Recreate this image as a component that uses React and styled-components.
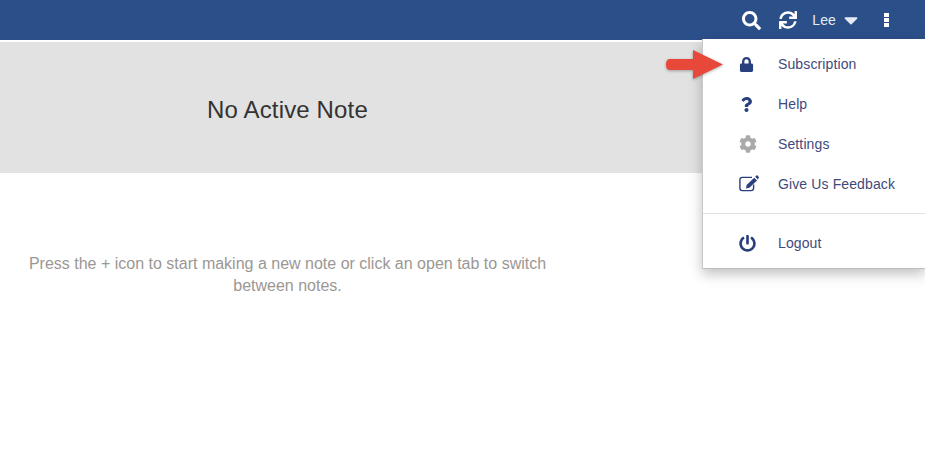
import React from 'react';
import styled, { createGlobalStyle } from 'styled-components';
import { FaSearch, FaSync, FaCaretDown, FaLock, FaQuestion, FaCog, FaPowerOff } from 'react-icons/fa';

const GlobalStyle = createGlobalStyle`
  html, body {
    margin: 0;
    padding: 0;
    background: #fff;
    font-family: "Liberation Sans", Arial, sans-serif;
  }
`;

const Page = styled.div`
  position: relative;
  width: 925px;
  height: 474px;
  overflow: hidden;
  background: #fff;
`;

const Header = styled.header`
  height: 40px;
  background: #2b4f89;
  display: flex;
  align-items: center;
  justify-content: flex-end;
  padding-right: 36px;
  color: #fff;
`;

const IconButton = styled.span`
  display: flex;
  align-items: center;
  font-size: ${props => props.size || 18}px;
  margin-right: ${props => props.gap || 0}px;
  color: ${props => props.soft ? '#e6ebf3' : '#fff'};
`;

const UserName = styled.span`
  font-size: 14px;
  color: #e6ebf3;
  margin-right: 4px;
  letter-spacing: 0.1px;
`;

const Dots = styled.span`
  display: flex;
  flex-direction: column;
  gap: 1px;
  margin-left: 22px;
`;

const Dot = styled.i`
  display: block;
  width: 5px;
  height: 4px;
  background: #fff;
`;

const Banner = styled.section`
  margin-top: 2px;
  height: 131px;
  background: #e2e2e2;
`;

const NoteColumn = styled.div`
  width: 575px;
  text-align: center;
`;

const BannerTitle = styled(NoteColumn)`
  font-size: 24px;
  line-height: 135px;
  color: #333;
  letter-spacing: 0.15px;
`;

const Hint = styled(NoteColumn)`
  margin-top: 80px;
  font-size: 16px;
  line-height: 22px;
  color: #9b9794;
  padding: 0 25px;
  box-sizing: border-box;
`;

const Menu = styled.nav`
  position: absolute;
  left: 702px;
  top: 39px;
  width: 223px;
  height: 230px;
  background: #fff;
  box-sizing: border-box;
  padding-top: 5px;
  border-left: 1px solid #c9c9c9;
  border-bottom: 1px solid #bdbdbd;
  box-shadow: 0 5px 12px rgba(0, 0, 0, 0.25);
`;

const MenuItem = styled.div`
  display: flex;
  align-items: center;
  height: 40px;
  font-size: 14px;
  letter-spacing: 0.12px;
  color: #3f4a7c;
`;

const MenuIcon = styled.span`
  flex: 0 0 75px;
  display: flex;
  justify-content: flex-start;
  box-sizing: border-box;
  padding-left: 36px;
  font-size: ${props => props.size || 16}px;
  color: ${props => props.muted ? '#a9a9a9' : '#2a3f7e'};
`;

const Divider = styled.hr`
  margin: 9px 0 9px;
  border: 0;
  border-top: 1px solid #e2e2e2;
`;

const Arrow = styled.svg`
  position: absolute;
  left: 664px;
  top: 48px;
`;

const FeedbackIcon = () => (
  <svg width="20" height="18" viewBox="0 0 20 18">
    <path d="M13 2.4 H3.4 Q.9 2.4 .9 4.9 V13 Q.9 15.6 3.4 15.6 H12 Q14.6 15.6 14.6 13 V9.4" fill="none" stroke="currentColor" strokeWidth="1.4" />
    <path d="M15.2 2.8 L18 5.6 L10.4 12.8 L7 13.4 L7.6 10 Z" fill="currentColor" />
    <path d="M16.2 1.8 L17.4 .6 Q18 .1 18.6 .6 L19.8 2 Q20.2 2.6 19.7 3.1 L18.8 4.4 Z" fill="currentColor" />
  </svg>
);

const items = [
  { label: 'Subscription', Icon: FaLock, size: 15 },
  { label: 'Help', Icon: FaQuestion, size: 15 },
  { label: 'Settings', Icon: FaCog, size: 18, muted: true },
  { label: 'Give Us Feedback', Icon: FeedbackIcon },
];

export default function App() {
  return (
    <Page>
      <GlobalStyle />
      <Header>
        <IconButton size={19} gap={18}><FaSearch /></IconButton>
        <IconButton size={18} gap={15}><FaSync /></IconButton>
        <UserName>Lee</UserName>
        <IconButton size={22} soft><FaCaretDown /></IconButton>
        <Dots><Dot /><Dot /><Dot /></Dots>
      </Header>
      <Banner>
        <BannerTitle>No Active Note</BannerTitle>
      </Banner>
      <Hint>Press the + icon to start making a new note or click an open tab to switch between notes.</Hint>
      <Menu>
        {items.map(({ label, Icon, size, muted }) => (
          <MenuItem key={label}>
            <MenuIcon size={size} muted={muted}><Icon /></MenuIcon>
            {label}
          </MenuItem>
        ))}
        <Divider />
        <MenuItem>
          <MenuIcon size={17}><FaPowerOff /></MenuIcon>
          Logout
        </MenuItem>
      </Menu>
      <Arrow width="62" height="36" viewBox="0 0 62 36">
        <path d="M6 11 H29 V2 L59 16.5 L29 31 V22 H6 Q2 22 2 16.5 Q2 11 6 11 Z" fill="#e8483a" style={{ filter: 'drop-shadow(0 1px 1.5px rgba(0,0,0,.3))' }} />
      </Arrow>
    </Page>
  );
}
